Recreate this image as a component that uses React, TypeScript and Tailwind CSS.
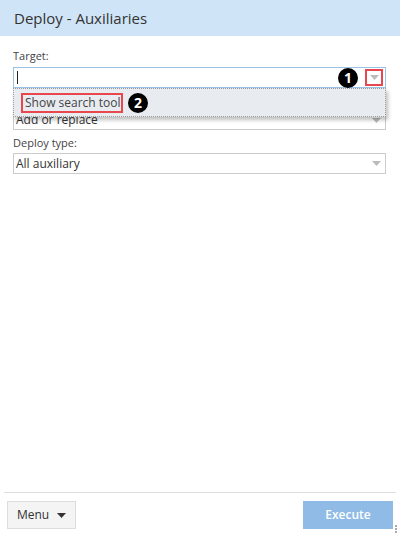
import React from 'react';

const font = { fontFamily: '"Open Sans", "Liberation Sans", sans-serif' };

function Badge({ n }: { n: number }) {
  return (
    <span className="flex h-[20px] w-[20px] items-center justify-center rounded-full bg-black text-[14px] font-bold leading-none text-white">
      {n}
    </span>
  );
}

function Caret({ color = '#bbb' }: { color?: string }) {
  return (
    <svg width="9" height="5" viewBox="0 0 9 5">
      <path d="M0 0 L9 0 L4.5 5 Z" fill={color} />
    </svg>
  );
}

export default function App() {
  return (
    <div className="flex h-[535px] w-[400px] flex-col bg-white text-[#333]" style={font}>
      {/* Header */}
      <div className="flex h-[36px] items-center bg-[#cfe4f6] pl-[14px] text-[15px] text-[#333]">
        Deploy - Auxiliaries
      </div>

      {/* Form */}
      <div className="relative flex-1 px-[13px] pt-[12px]">
        <div className="text-[11px] leading-[16px] text-[#444]">Target:</div>
        <div className="mt-[3px] flex h-[21px] w-[373px] items-center border border-[#9cc3e6] bg-white pl-[3px] pr-[2px]">
          <span className="h-[13px] w-px bg-[#222]" />
          <div className="ml-auto flex items-center gap-[7px]">
            <Badge n={1} />
            <span className="flex h-[17px] w-[18px] items-center justify-center border-2 border-[#e8484d]">
              <Caret />
            </span>
          </div>
        </div>

        <div className="h-[22px]" />
        <div className="flex h-[20px] w-[373px] items-center justify-between border border-[#ccc] px-[2px] text-[12px]">
          <span>Add or replace</span>
          <span className="mr-[2px]">
            <Caret />
          </span>
        </div>

        <div className="mt-[5px] text-[11px] leading-[16px] text-[#444]">Deploy type:</div>
        <div className="mt-[2px] flex h-[21px] w-[373px] items-center justify-between border border-[#ccc] px-[2px] text-[12px]">
          <span>All auxiliary</span>
          <span className="mr-[2px]">
            <Caret />
          </span>
        </div>

        {/* Dropdown popup */}
        <div className="absolute left-[13px] top-[52px] flex h-[29px] w-[373px] items-center border border-dotted border-[#999] bg-[#e8ecf1] pl-[7px] shadow-[2px_3px_4px_rgba(0,0,0,0.25)]">
          <span className="flex h-[20px] w-[102px] items-center border-2 border-[#e8484d] pl-[2px] text-[12px] text-[#444]">
            Show search tool
          </span>
          <span className="ml-[5px]">
            <Badge n={2} />
          </span>
        </div>
      </div>

      {/* Footer */}
      <div className="mx-[4px] border-t border-[#ddd]" />
      <div className="flex h-[42px] items-start justify-between pl-[7px] pr-[7px] pt-[8px]">
        <button className="flex h-[28px] w-[69px] items-center justify-center gap-[8px] border border-[#ddd] bg-[#f4f4f4] text-[12px] text-[#333]">
          Menu
          <Caret color="#333" />
        </button>
        <div className="relative">
          <button className="flex h-[28px] w-[90px] items-center justify-center bg-[#8fbbe6] text-[12px] font-semibold text-white">
            Execute
          </button>
          <svg className="absolute -right-[5px] bottom-[-5px]" width="4" height="9" viewBox="0 0 4 9">
            <rect x="1" y="0" width="2" height="2" fill="#aaa" />
            <rect x="1" y="3" width="2" height="2" fill="#aaa" />
            <rect x="1" y="6" width="2" height="2" fill="#aaa" />
          </svg>
        </div>
      </div>
    </div>
  );
}
